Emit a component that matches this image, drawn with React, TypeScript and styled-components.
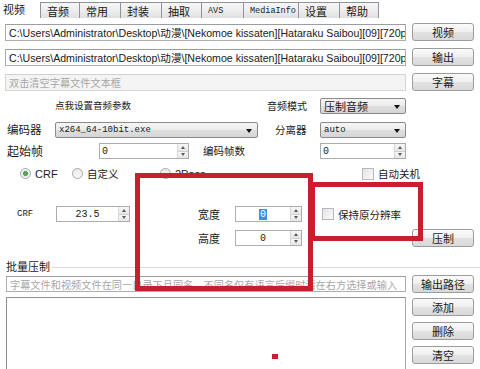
import styled, { createGlobalStyle } from "styled-components";

const CJK = `"Noto Sans CJK SC", "Liberation Sans", sans-serif`;
const LATIN = `"Liberation Sans", "Noto Sans CJK SC", sans-serif`;
const MONO = `"Liberation Mono", "Noto Sans CJK SC", monospace`;

const GlobalStyle = createGlobalStyle`
  html, body {
    margin: 0;
    padding: 0;
    background: #ffffff;
  }
  body {
    font-family: ${CJK};
    color: #1a1a1a;
  }
`;

const Window = styled.div`
  position: relative;
  width: 480px;
  height: 369px;
  overflow: hidden;
  background: #ffffff;
  font-size: 10.5px;
`;

const TabBar = styled.div`
  display: flex;
  align-items: flex-end;
  height: 18px;
`;

const Tab = styled.div<{ $w: number; $active?: boolean; $mono?: boolean }>`
  box-sizing: border-box;
  width: ${(p) => p.$w}px;
  height: ${(p) => (p.$active ? 18 : 16)}px;
  padding-left: ${(p) => (p.$active ? 3 : 6)}px;
  display: flex;
  align-items: center;
  font-family: ${(p) => (p.$mono ? MONO : CJK)};
  font-size: ${(p) => (p.$mono ? 8.5 : 11)}px;
  background: ${(p) =>
    p.$active ? "#ffffff" : "linear-gradient(#f6f6f6, #ebebeb 60%, #e0e0e0)"};
  border: ${(p) => (p.$active ? "none" : "1px solid #8f939b")};
  border-left: none;
  border-bottom: none;
  &:nth-child(2) {
    border-left: 1px solid #8f939b;
  }
`;

const Row = styled.div<{ $mt: number; $h: number }>`
  display: flex;
  align-items: center;
  margin-top: ${(p) => p.$mt}px;
  height: ${(p) => p.$h}px;
`;

const Label = styled.div<{ $ml: number; $w: number; $size?: number; $mono?: boolean }>`
  flex: none;
  margin-left: ${(p) => p.$ml}px;
  width: ${(p) => p.$w}px;
  font-family: ${(p) => (p.$mono ? MONO : CJK)};
  font-size: ${(p) => p.$size ?? 10.5}px;
  white-space: nowrap;
  line-height: 1;
`;

const TextBox = styled.div<{ $ml: number; $w: number; $h: number; $disabled?: boolean; $hint?: boolean }>`
  flex: none;
  box-sizing: border-box;
  margin-left: ${(p) => p.$ml}px;
  width: ${(p) => p.$w}px;
  height: ${(p) => p.$h}px;
  border: 1px solid ${(p) => (p.$disabled ? "#d4d6da" : "#abadb3")};
  border-top-color: ${(p) => (p.$disabled ? "#cfd1d4" : "#9a9da4")};
  background: ${(p) => (p.$disabled ? "#f4f4f4" : "#ffffff")};
  color: ${(p) => (p.$hint ? "#a7a7a7" : "#202020")};
  font-family: ${(p) => (p.$hint ? CJK : LATIN)};
  font-size: ${(p) => (p.$hint ? 10.2 : 10.6)}px;
  padding-left: 3px;
  display: flex;
  align-items: center;
  white-space: nowrap;
  overflow: hidden;
`;

const Button = styled.div<{ $ml: number; $h?: number }>`
  flex: none;
  box-sizing: border-box;
  margin-left: ${(p) => p.$ml}px;
  width: 62px;
  height: ${(p) => p.$h ?? 18}px;
  border: 1px solid #9c9c9c;
  border-radius: 3px;
  background: linear-gradient(#fbfbfb, #efefef 50%, #e2e2e2 52%, #d9d9d9);
  display: flex;
  align-items: center;
  justify-content: center;
  font-size: 11px;
  color: #1a1a1a;
`;

const Combo = styled.div<{ $ml: number; $w: number; $mono?: boolean }>`
  flex: none;
  position: relative;
  box-sizing: border-box;
  margin-left: ${(p) => p.$ml}px;
  width: ${(p) => p.$w}px;
  height: 16px;
  border: 1px solid #8a8a8a;
  border-radius: 2px;
  background: linear-gradient(#f6f6f6, #ebebeb 50%, #dedede 52%, #d6d6d6);
  padding-left: 3px;
  display: flex;
  align-items: center;
  font-family: ${(p) => (p.$mono ? MONO : CJK)};
  font-size: ${(p) => (p.$mono ? 9 : 11)}px;
  &::after {
    content: "";
    position: absolute;
    right: 5px;
    top: 6px;
    border-left: 3.5px solid transparent;
    border-right: 3.5px solid transparent;
    border-top: 4px solid #111;
  }
`;

const Spin = styled.div<{ $ml: number; $w: number; $h?: number }>`
  flex: none;
  box-sizing: border-box;
  margin-left: ${(p) => p.$ml}px;
  width: ${(p) => p.$w}px;
  height: ${(p) => p.$h ?? 16}px;
  border: 1px solid #abadb3;
  background: #ffffff;
  display: flex;
`;

const SpinValue = styled.div<{ $center?: boolean }>`
  flex: 1;
  display: flex;
  align-items: center;
  justify-content: ${(p) => (p.$center ? "center" : "flex-start")};
  padding-left: ${(p) => (p.$center ? 0 : 2)}px;
  font-family: ${MONO};
  font-size: 10px;
`;

const Selected = styled.span`
  background: #3d8ee6;
  color: #ffffff;
  padding: 0 1px;
`;

const SpinArrows = styled.div`
  width: 10px;
  display: flex;
  flex-direction: column;
  border-left: 1px solid #d9d9d9;
`;

const Arrow = styled.div<{ $up?: boolean }>`
  flex: 1;
  display: flex;
  align-items: center;
  justify-content: center;
  background: linear-gradient(#f7f7f7, #e6e6e6);
  border-bottom: ${(p) => (p.$up ? "1px solid #d0d0d0" : "none")};
  &::before {
    content: "";
    border-left: 2.5px solid transparent;
    border-right: 2.5px solid transparent;
    ${(p) => (p.$up ? "border-bottom: 3px solid #5a5a5a;" : "border-top: 3px solid #5a5a5a;")}
  }
`;

const Choice = styled.div<{ $ml: number; $w: number }>`
  flex: none;
  margin-left: ${(p) => p.$ml}px;
  width: ${(p) => p.$w}px;
  display: flex;
  align-items: center;
  gap: 4px;
  font-size: 10.5px;
  white-space: nowrap;
`;

const RadioDot = styled.span<{ $on?: boolean }>`
  box-sizing: border-box;
  width: 11px;
  height: 11px;
  border-radius: 50%;
  border: 1px solid #a4a9b0;
  background: ${(p) =>
    p.$on
      ? "radial-gradient(circle, #5aa35f 0 2.2px, #d8ecd9 2.8px, #f4f4f4 4px)"
      : "linear-gradient(#e9e9e9, #fafafa)"};
`;

const CheckBox = styled.span`
  box-sizing: border-box;
  width: 12px;
  height: 12px;
  border: 1px solid #b5b9bf;
  background: linear-gradient(135deg, #e4e4e4, #fbfbfb);
`;

const LatinText = styled.span`
  font-family: ${LATIN};
  font-size: 11px;
`;

const GroupHead = styled.div`
  display: flex;
  align-items: center;
  margin-top: 12px;
  height: 14px;
  padding-left: 6px;
  font-size: 11px;
  &::after {
    content: "";
    flex: 1;
    height: 1px;
    margin-left: 2px;
    margin-top: 3px;
    background: #d5dbe0;
  }
`;

const ListArea = styled.div`
  display: flex;
  margin-top: 4px;
`;

const ListBox = styled.div`
  flex: none;
  box-sizing: border-box;
  margin-left: 6px;
  width: 400px;
  height: 90px;
  border: 1px solid #a9a9a9;
  border-left-color: #8f8f8f;
  border-top-color: #8f8f8f;
  background: #ffffff;
`;

const SideButtons = styled.div`
  display: flex;
  flex-direction: column;
  gap: 6px;
  margin: 1px 0 0 6px;
`;

const Mark = styled.div<{ $x: number; $y: number; $w: number; $h: number }>`
  position: absolute;
  box-sizing: border-box;
  left: ${(p) => p.$x}px;
  top: ${(p) => p.$y}px;
  width: ${(p) => p.$w}px;
  height: ${(p) => p.$h}px;
  border: 5px solid #c71f2d;
  pointer-events: none;
`;

const Dot = styled.div`
  position: absolute;
  left: 272px;
  top: 354px;
  width: 6px;
  height: 5px;
  background: #c71f2d;
`;

const SpinBox = ({ ml, w, h, children, center }: { ml: number; w: number; h?: number; children: React.ReactNode; center?: boolean }) => (
  <Spin $ml={ml} $w={w} $h={h}>
    <SpinValue $center={center}>{children}</SpinValue>
    <SpinArrows>
      <Arrow $up />
      <Arrow />
    </SpinArrows>
  </Spin>
);

const tabs: [string, number, boolean?][] = [
  ["音频", 40],
  ["常用", 41],
  ["封装", 41],
  ["抽取", 40],
  ["AVS", 42, true],
  ["MediaInfo", 55, true],
  ["设置", 41],
  ["帮助", 39],
];

const path = "C:\\Users\\Administrator\\Desktop\\动漫\\[Nekomoe kissaten][Hataraku Saibou][09][720p][CHS].mp4";

export default function App() {
  return (
    <Window>
      <GlobalStyle />
      <TabBar>
        <Tab $w={40} $active>
          视频
        </Tab>
        {tabs.map(([t, w, mono]) => (
          <Tab key={t} $w={w} $mono={mono}>
            {t}
          </Tab>
        ))}
      </TabBar>

      <Row $mt={5} $h={18}>
        <TextBox $ml={5} $w={401} $h={17}>{path}</TextBox>
        <Button $ml={6}>视频</Button>
      </Row>
      <Row $mt={7} $h={18}>
        <TextBox $ml={5} $w={401} $h={17}>{path}</TextBox>
        <Button $ml={6}>输出</Button>
      </Row>
      <Row $mt={7} $h={18}>
        <TextBox $ml={5} $w={401} $h={17} $disabled $hint>
          双击清空字幕文件文本框
        </TextBox>
        <Button $ml={6}>字幕</Button>
      </Row>

      <Row $mt={7} $h={16}>
        <Label $ml={55} $w={73} $size={9.5}>点我设置音频参数</Label>
        <Label $ml={139} $w={40} $size={10}>音频模式</Label>
        <Combo $ml={13} $w={86}>压制音频</Combo>
      </Row>
      <Row $mt={8} $h={16}>
        <Label $ml={7} $w={35} $size={11.5}>编码器</Label>
        <Combo $ml={13} $w={203} $mono>x264_64-10bit.exe</Combo>
        <Label $ml={17} $w={32} $size={10.5}>分离器</Label>
        <Combo $ml={13} $w={86} $mono>auto</Combo>
      </Row>
      <Row $mt={5} $h={16}>
        <Label $ml={7} $w={38} $size={12}>起始帧</Label>
        <SpinBox ml={54} w={90}>0</SpinBox>
        <Label $ml={14} $w={42} $size={10.5}>编码帧数</Label>
        <SpinBox ml={75} w={86}>0</SpinBox>
      </Row>
      <Row $mt={7} $h={15}>
        <Choice $ml={20} $w={52}>
          <RadioDot $on />
          <LatinText>CRF</LatinText>
        </Choice>
        <Choice $ml={0} $w={88}>
          <RadioDot />
          自定义
        </Choice>
        <Choice $ml={0} $w={80}>
          <RadioDot />
          <LatinText>2Pass</LatinText>
        </Choice>
        <Choice $ml={122} $w={60}>
          <CheckBox />
          自动关机
        </Choice>
      </Row>

      <Row $mt={25} $h={16}>
        <Label $ml={17} $w={16} $size={9} $mono>CRF</Label>
        <SpinBox ml={23} w={74} center>23.5</SpinBox>
        <Label $ml={68} $w={22} $size={11}>宽度</Label>
        <SpinBox ml={15} w={67} center>
          <Selected>0</Selected>
        </SpinBox>
        <Choice $ml={20} $w={90}>
          <CheckBox />
          保持原分辨率
        </Choice>
      </Row>
      <Row $mt={7} $h={18}>
        <Label $ml={198} $w={22} $size={11}>高度</Label>
        <SpinBox ml={15} w={67} h={16} center>0</SpinBox>
        <Button $ml={110}>压制</Button>
      </Row>

      <GroupHead>批量压制</GroupHead>
      <Row $mt={2} $h={18}>
        <TextBox $ml={6} $w={400} $h={16} $hint>
          字幕文件和视频文件在同一目录下且同名，不同名仅有语言后缀时请在右方选择或输入
        </TextBox>
        <Button $ml={6}>输出路径</Button>
      </Row>
      <ListArea>
        <ListBox />
        <SideButtons>
          <Button $ml={0}>添加</Button>
          <Button $ml={0}>删除</Button>
          <Button $ml={0}>清空</Button>
        </SideButtons>
      </ListArea>

      <Mark $x={135} $y={173} $w={178} $h={118} />
      <Mark $x={310} $y={182} $w={113} $h={59} />
      <Dot />
    </Window>
  );
}
